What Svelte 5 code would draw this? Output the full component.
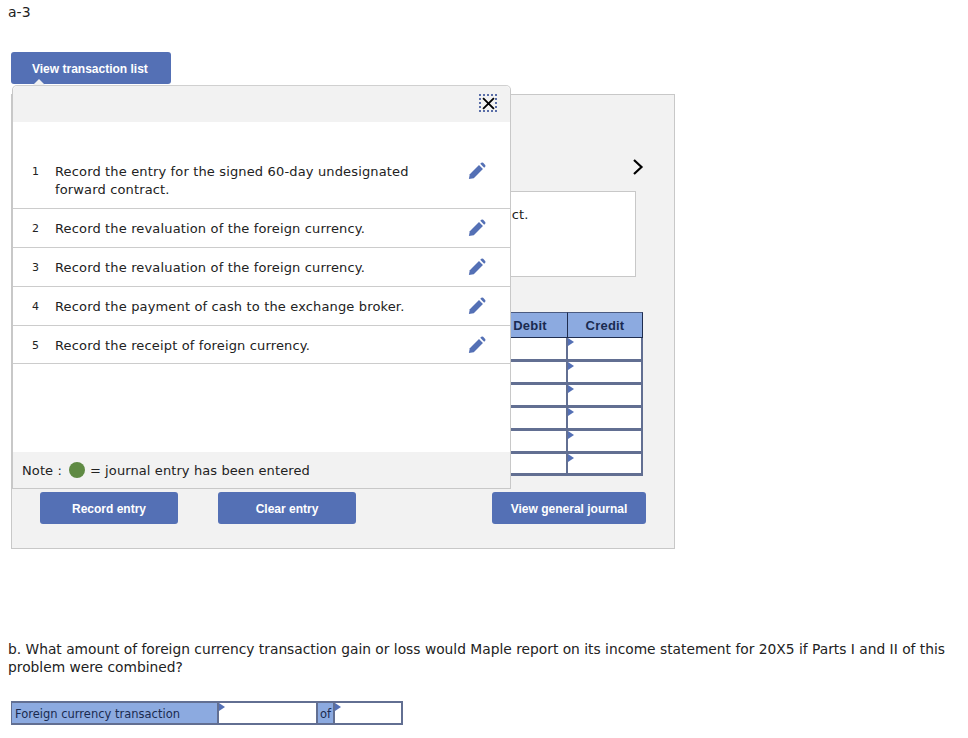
<script>
	const entries = [
		{ id: 1, text: 'Record the entry for the signed 60-day undesignated forward contract.' },
		{ id: 2, text: 'Record the revaluation of the foreign currency.' },
		{ id: 3, text: 'Record the revaluation of the foreign currency.' },
		{ id: 4, text: 'Record the payment of cash to the exchange broker.' },
		{ id: 5, text: 'Record the receipt of foreign currency.' }
	];
	const rows = [1, 2, 3, 4, 5, 6];
</script>

<div class="page">
	<div class="part-label">a-3</div>

	<button class="btn list-btn">View transaction list</button>

	<div class="panel">
		<div class="popup">
			<div class="popup-top">
				<button class="close" aria-label="Close">
					<svg width="13" height="13" viewBox="0 0 12 12"><path d="M1 1 L11 11 M11 1 L1 11" stroke="#000" stroke-width="1.7" /></svg>
				</button>
			</div>
			<div class="entries">
				{#each entries as entry}
					<div class="entry">
						<span class="num">{entry.id}</span>
						<span class="entry-text">{entry.text}</span>
						<svg class="pencil" width="18" height="18" viewBox="0 0 20 20">
							<path d="M1 19 L2 13.6 L12.2 3.4 L16.6 7.8 L6.4 18 Z" fill="#5470b5" />
							<path d="M13.6 2 L14.8 0.9 Q15.8 0.2 16.8 0.9 L19.1 3.2 Q19.8 4.2 19.1 5.2 L18 6.4 Z" fill="#5470b5" />
						</svg>
					</div>
				{/each}
			</div>
			<div class="note">
				Note :
				<span class="dot"></span>
				= journal entry has been entered
			</div>
		</div>

		<div class="nav">
			<svg width="12" height="18" viewBox="0 0 12 18"><path d="M2 2 L9.5 9 L2 16" fill="none" stroke="#000" stroke-width="2.2" /></svg>
		</div>

		<div class="prompt">Record the entry for the signed 60-day undesignated forward contract.</div>

		<table class="journal">
			<thead>
				<tr>
					<th>General Journal</th>
					<th class="amount">Debit</th>
					<th class="amount">Credit</th>
				</tr>
			</thead>
			<tbody>
				{#each rows as row}
					<tr>
						<td></td>
						<td></td>
						<td class="marked"></td>
					</tr>
				{/each}
			</tbody>
		</table>

		<div class="actions">
			<button class="btn action">Record entry</button>
			<button class="btn action">Clear entry</button>
			<button class="btn action wide">View general journal</button>
		</div>
	</div>

	<p class="question">
		b. What amount of foreign currency transaction gain or loss would Maple report on its income statement for 20X5 if Parts I and II of this problem were combined?
	</p>

	<div class="answer">
		<div class="answer-label">Foreign currency transaction</div>
		<div class="answer-input first"></div>
		<div class="answer-of">of</div>
		<div class="answer-input second"></div>
	</div>
</div>

<style>
	:global(body) {
		background: #fff;
	}

	.page {
		width: 968px;
		height: 738px;
		overflow: hidden;
		font-family: "DejaVu Sans", Verdana, sans-serif;
		color: #222;
		box-sizing: border-box;
		padding-top: 4px;
	}

	.part-label {
		font-size: 14px;
		line-height: 17px;
		margin-left: 8px;
		margin-bottom: 31px;
	}

	.btn {
		display: block;
		background: #5470b5;
		color: #fff;
		border: none;
		border-radius: 3px;
		font-family: "Liberation Sans", Arial, sans-serif;
		font-weight: bold;
		font-size: 12px;
		padding: 2px 0 0;
		height: 32px;
	}

	.list-btn {
		width: 160px;
		margin-left: 11px;
		margin-bottom: 10px;
		text-align: left;
		padding-left: 21px;
		position: relative;
	}

	.list-btn::after {
		content: '';
		position: absolute;
		left: 22px;
		bottom: -1px;
		border-left: 6px solid transparent;
		border-right: 6px solid transparent;
		border-bottom: 6px solid #f2f2f2;
	}

	.panel {
		position: relative;
		box-sizing: border-box;
		width: 664px;
		height: 455px;
		margin-left: 11px;
		background: #f2f2f2;
		border: 1px solid #c8c8c8;
		padding: 63px 0 0 28px;
	}

	.popup {
		position: absolute;
		left: 0;
		top: -10px;
		width: 499px;
		height: 404px;
		box-sizing: border-box;
		background: #fff;
		border: 1px solid #c8c8c8;
		border-top-color: #d0d0d0;
		border-radius: 5px 5px 0 0;
		display: flex;
		flex-direction: column;
		z-index: 2;
		font-size: 13px;
	}

	.popup-top {
		height: 36px;
		background: #f2f2f2;
		border-radius: 5px 5px 0 0;
		display: flex;
		justify-content: flex-end;
		padding: 8px 13px 0 0;
		box-sizing: border-box;
		flex: none;
	}

	.close {
		width: 18px;
		height: 18px;
		box-sizing: border-box;
		padding: 0;
		border: 2px dotted #5a6ea8;
		background: transparent;
		display: flex;
		align-items: center;
		justify-content: center;
	}

	.entries {
		flex: 1;
		padding-top: 30px;
	}

	.entry {
		display: flex;
		align-items: flex-start;
		padding: 11px 24px 9px 0;
		border-bottom: 1px solid #ccc;
		line-height: 18px;
		letter-spacing: 0.15px;
	}

	.entry:last-child {
		padding-bottom: 8px;
	}

	.num {
		width: 42px;
		padding-left: 19px;
		box-sizing: border-box;
		font-size: 11px;
		flex: none;
	}

	.entry-text {
		width: 370px;
		flex: none;
	}

	.pencil {
		margin: -1px 0 0 auto;
		flex: none;
	}

	.note {
		height: 36px;
		flex: none;
		background: #f2f2f2;
		display: flex;
		align-items: center;
		gap: 6px;
		padding-left: 9px;
		letter-spacing: 0.1px;
	}

	.dot {
		width: 16px;
		height: 16px;
		margin: 0 -1px 0 1px;
		border-radius: 50%;
		background: #5f8a43;
	}

	.nav {
		display: flex;
		justify-content: flex-end;
		height: 33px;
		padding-right: 30px;
		align-items: flex-start;
	}

	.prompt {
		box-sizing: border-box;
		width: 596px;
		height: 86px;
		background: #fff;
		border: 1px solid #c8c8c8;
		font-size: 13px;
		letter-spacing: 0.15px;
		padding: 15px 0 0 15px;
		margin-bottom: 35px;
	}

	.journal {
		width: 603px;
		border-collapse: separate;
		border-spacing: 0;
		table-layout: fixed;
		font-size: 13px;
		margin-bottom: 16px;
	}

	.journal th {
		padding: 0;
		background: #8caae0;
		color: #1a2a50;
		font-family: "Liberation Sans", Arial, sans-serif;
		font-size: 13px;
		letter-spacing: 0.2px;
		border-top: 1px solid #4a5a80;
		border-bottom: 1px solid #1f2d4f;
		border-right: 1px solid #1f2d4f;
		box-sizing: border-box;
		height: 26px;
	}

	.journal th.amount {
		width: 75px;
	}

	.journal td {
		height: 23px;
		box-sizing: border-box;
		padding: 0;
		background: #fff;
		border-bottom: 3px solid #626f92;
		border-right: 2px solid #626f92;
	}

	.journal tr:first-child td {
		height: 24px;
	}

	.journal tr:last-child td {
		height: 22px;
	}

	.marked {
		position: relative;
	}

	.marked::before,
	.answer-input::before {
		content: '';
		position: absolute;
		left: 0;
		top: 0;
		border-left: 6px solid #5470b5;
		border-top: 4px solid transparent;
		border-bottom: 4px solid transparent;
	}

	.actions {
		display: flex;
		width: 606px;
	}

	.action {
		width: 138px;
		flex: none;
	}

	.action + .action {
		margin-left: 40px;
	}

	.action.wide {
		width: 154px;
		margin-left: auto;
	}

	.question {
		margin: 91px 16px 0 8px;
		font-size: 13.8px;
		line-height: 18px;
	}

	.answer {
		display: flex;
		margin: 25px 0 0 11px;
		width: 392px;
		height: 24px;
		box-sizing: border-box;
		border: 2px solid #626f92;
		border-left: 1px solid #626f92;
		font-size: 11.5px;
		color: #1a2a50;
	}

	.answer-label {
		width: 205px;
		background: #8caae0;
		line-height: 22px;
		padding-left: 3px;
		box-sizing: border-box;
	}

	.answer-input {
		position: relative;
		background: #fff;
		border-left: 2px solid #626f92;
		border-right: 2px solid #626f92;
		box-sizing: border-box;
	}

	.first {
		width: 101px;
	}

	.second {
		flex: 1;
		border-right: none;
	}

	.answer-of {
		width: 15px;
		background: #8caae0;
		line-height: 22px;
		text-align: center;
	}
</style>
